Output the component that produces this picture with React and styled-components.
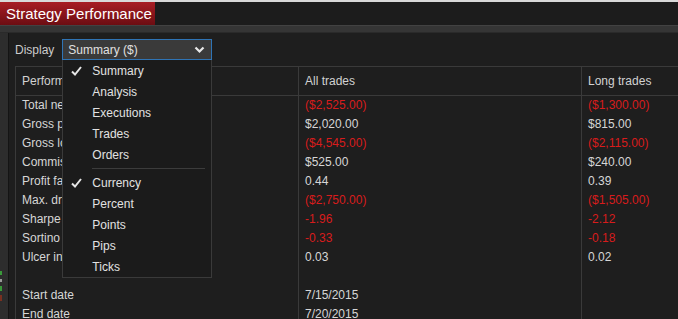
import React from 'react';
import styled, { createGlobalStyle } from 'styled-components';

const Global = createGlobalStyle`
    html, body {
        margin: 0;
        padding: 0;
        background: #1c1c1c;
        overflow: hidden;
    }
    body {
        font-family: "Liberation Sans", Arial, sans-serif;
        font-size: 12px;
        color: #d4d4d4;
    }
`

const Window = styled.div`
    width: 678px;
    height: 319px;
    display: flex;
    flex-direction: column;
    overflow: hidden;
    border-top: 2px solid #d9d9d9;
    box-sizing: border-box;
`

const TitleBar = styled.div`
    height: 23px;
    display: flex;
    background: #1c1c1c;
`

const Tab = styled.div`
    width: 155px;
    display: flex;
    align-items: center;
    padding-left: 6px;
    box-sizing: border-box;
    font-size: 15px;
    color: #fff;
    background: linear-gradient(#a81d24, #6c0d12);
`

const Strip = styled.div`
    height: 6px;
    background: #353535;
    border-top: 1px solid #424242;
    border-bottom: 1px solid #2a2a2a;
`

const Body = styled.div`
    flex: 1;
    display: flex;
    min-height: 0;
`

const Gutter = styled.div`
    width: 8px;
    background: #2d2d2d;
    border-right: 1px solid #141414;
    display: flex;
    flex-direction: column;
    justify-content: flex-end;
    padding-bottom: 18px;
    gap: 4px;
`

const Tick = styled.div`
    width: 2px;
    height: ${p => p.h}px;
    background: ${p => p.c};
`

const Panel = styled.div`
    flex: 1;
    background: #1e1e1e;
    padding: 6px 0 0 6px;
    display: flex;
    flex-direction: column;
    gap: 6px;
    min-width: 0;
`

const DisplayRow = styled.div`
    display: flex;
    align-items: center;
    gap: 8px;
    height: 21px;
    position: relative;
    z-index: 2;
`

const Label = styled.span`
    color: #cccccc;
`

const SelectBox = styled.div`
    width: 150px;
    height: 21px;
    box-sizing: border-box;
    border: 1px solid #2f74b5;
    background: #3a3a3a;
    display: flex;
    align-items: center;
    justify-content: space-between;
    padding: 0 6px 0 5px;
    color: #e0e0e0;
    position: relative;
`

const Menu = styled.div`
    position: absolute;
    top: 20px;
    left: -1px;
    width: 150px;
    box-sizing: border-box;
    background: #1b1b1b;
    border: 1px solid #3a3a3a;
    border-top: none;
`

const Item = styled.div`
    height: 21px;
    display: flex;
    align-items: center;
    padding-left: 29px;
    position: relative;
    color: #e2e2e2;
`

const Check = styled.svg`
    position: absolute;
    left: 8px;
    top: 6px;
`

const Separator = styled.div`
    height: 1px;
    background: #3c3c3c;
    margin: 3px 6px 3px 29px;
`

const Table = styled.div`
    width: 900px;
    border: 1px solid #3a3a3a;
    border-right: none;
    display: grid;
    grid-template-columns: 282px 283px 1fr;
`

const HeadCell = styled.div`
    height: 28px;
    display: flex;
    align-items: center;
    padding-left: 6px;
    border-bottom: 1px solid #3a3a3a;
    border-left: ${p => (p.first ? 'none' : '1px solid #3a3a3a')};
    color: #d2d2d2;
`

const Column = styled.div`
    display: flex;
    flex-direction: column;
    border-left: ${p => (p.first ? 'none' : '1px solid #3a3a3a')};
    padding-left: 6px;
`

const Cell = styled.div`
    height: 19px;
    line-height: 19px;
    white-space: nowrap;
    color: ${p => (p.neg ? '#d81c1c' : '#d6d6d6')};
`

const Chevron = () => (
    <svg width="11" height="8" viewBox="0 0 11 8">
        <path d="M1.5 1.5 L5.5 5.5 L9.5 1.5" fill="none" stroke="#e8e8e8" strokeWidth="2.2" />
    </svg>
)

const CheckMark = () => (
    <Check width="11" height="10" viewBox="0 0 11 10">
        <path d="M1 5.5 L4 8.5 L10 1" fill="none" stroke="#e6e6e6" strokeWidth="2" />
    </Check>
)

const modes = ['Summary', 'Analysis', 'Executions', 'Trades', 'Orders']
const units = ['Currency', 'Percent', 'Points', 'Pips', 'Ticks']

const labels = [
    'Total net profit', 'Gross profit', 'Gross loss', 'Commission', 'Profit factor',
    'Max. drawdown', 'Sharpe ratio', 'Sortino ratio', 'Ulcer index', '', 'Start date', 'End date',
]

const allTrades = [
    ['($2,525.00)', 1], ['$2,020.00'], ['($4,545.00)', 1], ['$525.00'], ['0.44'],
    ['($2,750.00)', 1], ['-1.96', 1], ['-0.33', 1], ['0.03'], [''], ['7/15/2015'], ['7/20/2015'],
]

const longTrades = [
    ['($1,300.00)', 1], ['$815.00'], ['($2,115.00)', 1], ['$240.00'], ['0.39'],
    ['($1,505.00)', 1], ['-2.12', 1], ['-0.18', 1], ['0.02'], [''], [''], [''],
]

function App() {
    return (
        <Window>
            <Global />
            <TitleBar>
                <Tab>Strategy Performance</Tab>
            </TitleBar>
            <Strip />
            <Body>
                <Gutter>
                    <Tick h={4} c="#3a9a3a" />
                    <Tick h={3} c="#9a9a9a" />
                    <Tick h={5} c="#3a9a3a" />
                    <Tick h={6} c="#7a3020" />
                </Gutter>
                <Panel>
                    <DisplayRow>
                        <Label>Display</Label>
                        <SelectBox>
                            <span>Summary ($)</span>
                            <Chevron />
                            <Menu>
                                {modes.map((m, i) => (
                                    <Item key={m}>
                                        {i === 0 && <CheckMark />}
                                        {m}
                                    </Item>
                                ))}
                                <Separator />
                                {units.map((u, i) => (
                                    <Item key={u}>
                                        {i === 0 && <CheckMark />}
                                        {u}
                                    </Item>
                                ))}
                            </Menu>
                        </SelectBox>
                    </DisplayRow>
                    <Table>
                        <HeadCell first>Performance</HeadCell>
                        <HeadCell>All trades</HeadCell>
                        <HeadCell>Long trades</HeadCell>
                        <Column first>
                            {labels.map((l, i) => <Cell key={i}>{l}</Cell>)}
                        </Column>
                        <Column>
                            {allTrades.map(([v, n], i) => <Cell key={i} neg={n}>{v}</Cell>)}
                        </Column>
                        <Column>
                            {longTrades.map(([v, n], i) => <Cell key={i} neg={n}>{v}</Cell>)}
                        </Column>
                    </Table>
                </Panel>
            </Body>
        </Window>
    );
}

export default App;
